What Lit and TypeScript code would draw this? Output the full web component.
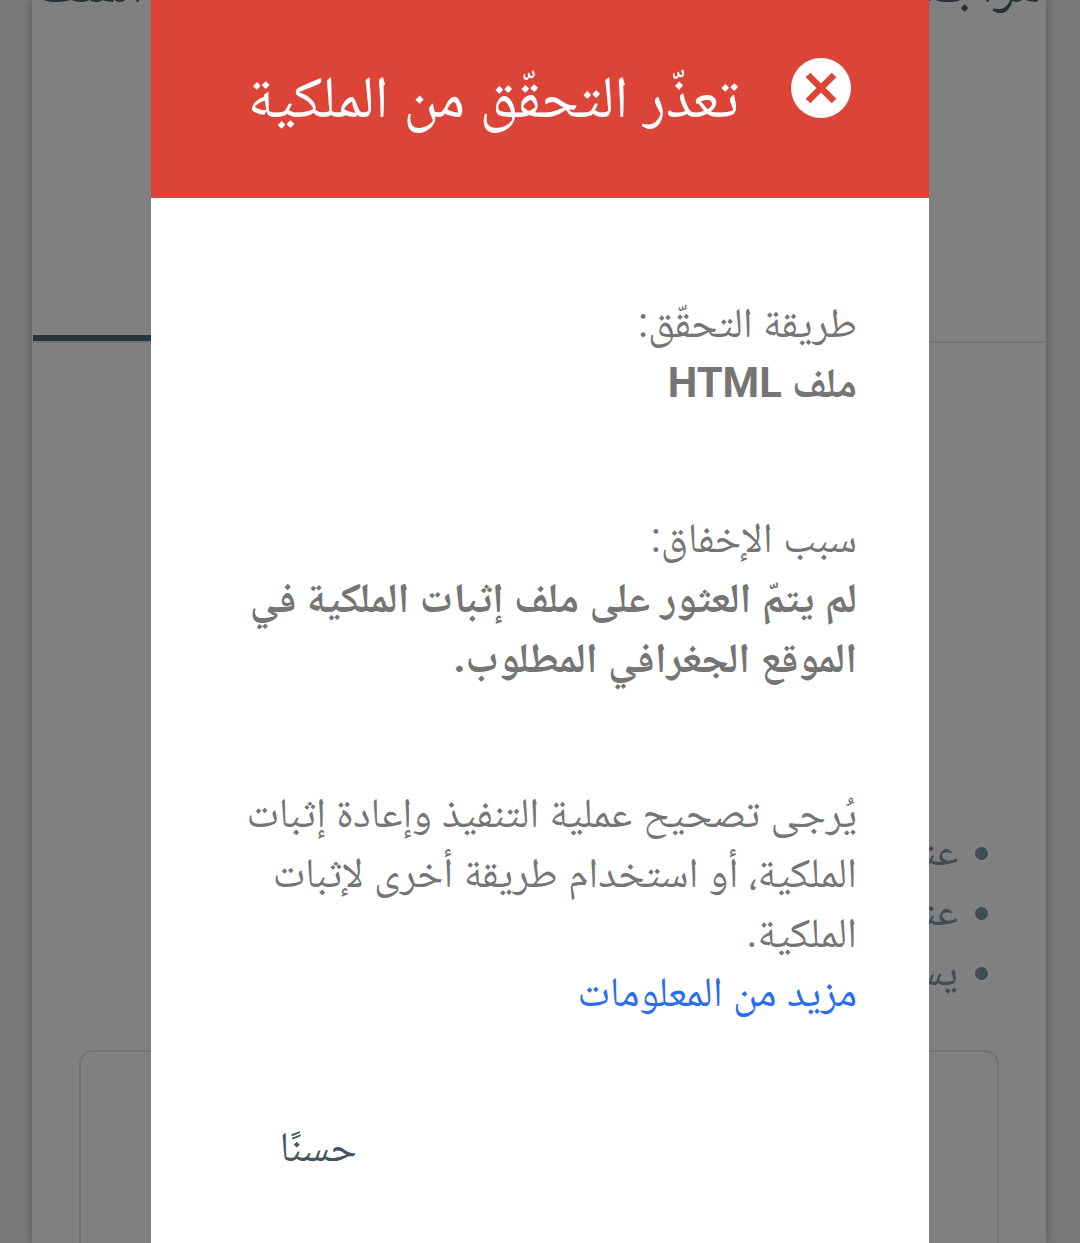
import { LitElement, html, css } from "lit";
import { customElement } from "lit/decorators.js";

@customElement("app-root")
export class AppRoot extends LitElement {
  static styles = css`
    :host { display: block; width: 1080px; height: 1243px; position: relative; overflow: hidden; background: #77787a; font-family: Roboto, "Noto Naskh Arabic", "DejaVu Sans", sans-serif; direction: rtl; }
    .page { box-sizing: border-box; margin: 0 34px 0 32px; height: 1243px; background: #808080; box-shadow: 0 0 8px rgba(0,0,0,.3); overflow: hidden; color: #3f4c54; }
    .top { height: 343px; box-sizing: border-box; border-bottom: 2px solid #747474; position: relative; overflow: hidden; }
    .top h1 { position: absolute; right: 4px; left: 4px; top: -47px; margin: 0; font-size: 56px; line-height: 60px; font-weight: 400; color: #263238; white-space: nowrap; overflow: hidden; text-align: justify; text-align-last: justify; }
    .tab { position: absolute; left: 1px; bottom: 0; width: 200px; height: 6px; background: #28373e; }
    .list { margin: 478px 0 0; padding: 0 58px 0 0; list-style: none; font-size: 42px; line-height: 60px; }
    .list li { display: flex; align-items: center; gap: 17px; }
    .list i { width: 13px; height: 13px; margin-top: 4px; border-radius: 50%; background: #3f4c54; }
    .card { margin: 49px 47px 0 47px; height: 300px; border: 2px solid #737373; border-radius: 14px; }
    .dialog { position: absolute; left: 151px; top: 0; width: 778px; height: 1243px; background: #fff; }
    .head { height: 198px; background: #dd4438; color: #fff; box-sizing: border-box; padding: 58px 78px 0 0; display: flex; align-items: flex-start; gap: 52px; font-size: 59.3px; line-height: 78px; }
    .icon { width: 60px; height: 60px; flex: none; display: block; }
    .body { padding: 95px 72px 0 73px; font-size: 41.8px; line-height: 60px; color: #757575; }
    p { margin: 0 0 95px; }
    b { display: block; }
    a { color: #2a6ef0; display: block; margin-top: -1px; }
    .actions { padding: 0 572px 0 0; margin-top: 0; font-size: 42px; line-height: 60px; color: #45555f; }
  `;
  render() {
    return html`<div class="page">
        <div class="top"><h1>مراجعة الملف</h1><div class="tab"></div></div>
        <ul class="list"><li><i></i>عند</li><li><i></i>عند</li><li><i></i>يسـ</li></ul>
        <div class="card"></div>
      </div>
      <div class="dialog">
        <div class="head">
          <svg class="icon" viewBox="0 0 60 60"><circle cx="30" cy="30" r="30" fill="#fff"/><path d="M17 17 43 43M43 17 17 43" stroke="#dd4438" stroke-width="6.5" fill="none"/></svg>
          <span>تعذّر التحقّق من الملكية</span>
        </div>
        <div class="body">
          <p>طريقة التحقّق:<b>ملف HTML</b></p>
          <p>سبب الإخفاق:<b>لم يتمّ العثور على ملف إثبات الملكية في الموقع الجغرافي المطلوب.</b></p>
          <p>يُرجى تصحيح عملية التنفيذ وإعادة إثبات الملكية، أو استخدام طريقة أخرى لإثبات الملكية.<a>مزيد من المعلومات</a></p>
        </div>
        <div class="actions">حسنًا</div>
      </div>`;
  }
}
